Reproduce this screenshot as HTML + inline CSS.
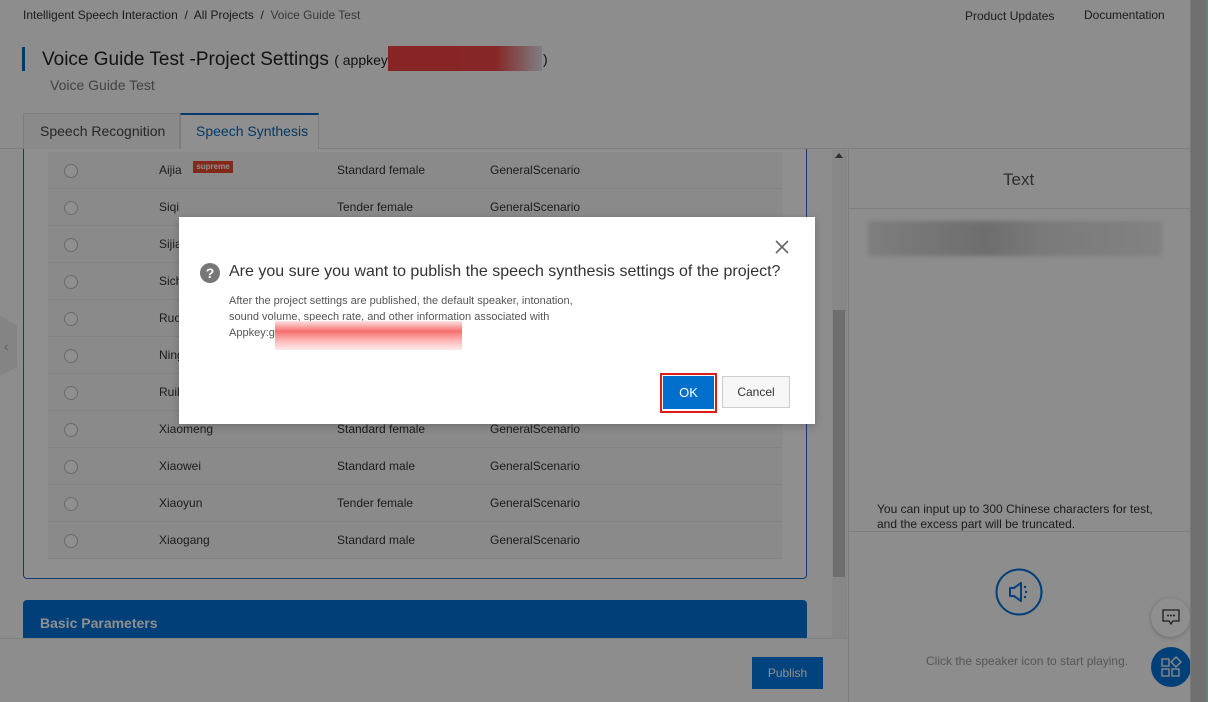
<!DOCTYPE html>
<html><head><meta charset="utf-8"><style>
*{margin:0;padding:0;box-sizing:border-box}
body{width:1208px;height:702px;overflow:hidden;background:#fbfbfb;font-family:"Liberation Sans",sans-serif;position:relative;color:#1a1a1a}
.a{position:absolute}
.t{font-size:12px;color:#333;white-space:nowrap}
.row{position:absolute;left:48px;width:734px;height:37px;border-bottom:1px solid #e8e8e8;background:#f7f7f7}
.row .r{position:absolute;left:16px;top:12px;width:14px;height:14px;border:1px solid #bbb;border-radius:50%;background:#fff}
.row span{position:absolute;top:11px;font-size:12px;color:#333}
</style></head><body>
<div class="a t" style="left:23px;top:8px;color:#333">Intelligent Speech Interaction &nbsp;/&nbsp; All Projects &nbsp;/&nbsp; <span style="color:#666">Voice Guide Test</span></div>
<div class="a t" style="left:965px;top:9px">Product Updates</div>
<div class="a t" style="left:1084px;top:8px">Documentation</div>
<div class="a" style="left:22px;top:47px;width:3px;height:24px;background:#0068c0"></div>
<div class="a" style="left:42px;top:49px;font-size:19px;color:#222;white-space:nowrap">Voice Guide Test -Project Settings <span style="font-size:14px">( appkey:</span></div>
<div class="a" style="left:388px;top:46px;width:154px;height:25px;background:linear-gradient(90deg,#f04040 0%,#f04545 70%,#e0e2ea 100%)"></div>
<div class="a" style="left:543px;top:51px;font-size:14px;color:#222">)</div>
<div class="a" style="left:50px;top:77px;font-size:14px;color:#777">Voice Guide Test</div>
<div class="a" style="left:0;top:148px;width:1190px;height:1px;background:#e0e0e0"></div>
<div class="a" style="left:23px;top:113px;width:157px;height:36px;border:1px solid #e0e0e0;border-bottom:none;background:#f7f7f7"></div>
<div class="a" style="left:40px;top:123px;font-size:14px;color:#444">Speech Recognition</div>
<div class="a" style="left:180px;top:113px;width:139px;height:36px;border:1px solid #e0e0e0;border-top:2px solid #0068c0;border-bottom:none;background:#fff"></div>
<div class="a" style="left:196px;top:123px;font-size:14px;color:#0a66b4">Speech Synthesis</div>
<div class="a" style="left:23px;top:149px;width:784px;height:430px;border:1px solid #1b6ec0;border-top:none;border-radius:0 0 4px 4px;background:#fff"></div>
<div class="row" style="top:152px"><div class="r"></div><span style="left:111px">Aijia</span><div class="a" style="left:145px;top:9px;width:40px;height:12px;background:#e84a2e;color:#fff;font-size:8px;font-weight:bold;text-align:center;line-height:12px">supreme</div><span style="left:289px">Standard female</span><span style="left:442px">GeneralScenario</span></div>
<div class="row" style="top:189px"><div class="r"></div><span style="left:111px">Siqi</span><span style="left:289px">Tender female</span><span style="left:442px">GeneralScenario</span></div>
<div class="row" style="top:226px"><div class="r"></div><span style="left:111px">Sijia</span></div>
<div class="row" style="top:263px"><div class="r"></div><span style="left:111px">Sicheng</span></div>
<div class="row" style="top:300px"><div class="r"></div><span style="left:111px">Ruoxi</span></div>
<div class="row" style="top:337px"><div class="r"></div><span style="left:111px">Ninger</span></div>
<div class="row" style="top:374px"><div class="r"></div><span style="left:111px">Ruilin</span></div>
<div class="row" style="top:411px"><div class="r"></div><span style="left:111px">Xiaomeng</span><span style="left:289px">Standard female</span><span style="left:442px">GeneralScenario</span></div>
<div class="row" style="top:448px"><div class="r"></div><span style="left:111px">Xiaowei</span><span style="left:289px">Standard male</span><span style="left:442px">GeneralScenario</span></div>
<div class="row" style="top:485px"><div class="r"></div><span style="left:111px">Xiaoyun</span><span style="left:289px">Tender female</span><span style="left:442px">GeneralScenario</span></div>
<div class="row" style="top:522px"><div class="r"></div><span style="left:111px">Xiaogang</span><span style="left:289px">Standard male</span><span style="left:442px">GeneralScenario</span></div>
<div class="a" style="left:0;top:316px;width:17px;height:60px;background:#ececec;clip-path:polygon(0 0,100% 15%,100% 85%,0 100%)"></div>
<div class="a" style="left:4px;top:338px;font-size:14px;color:#aaa">‹</div>
<div class="a" style="left:832px;top:150px;width:15px;height:488px;background:#f0f0f0"></div>
<div class="a" style="left:833px;top:310px;width:12px;height:267px;background:#c4c4c4"></div>
<div class="a" style="left:835px;top:153px;width:0;height:0;border:4px solid transparent;border-bottom:5px solid #555;border-top:none"></div>
<div class="a" style="left:848px;top:149px;width:1px;height:553px;background:#e0e0e0"></div>
<div class="a" style="left:849px;top:208px;width:341px;height:1px;background:#e0e0e0"></div>
<div class="a" style="left:1003px;top:170px;font-size:17px;color:#555">Text</div>
<div class="a" style="left:868px;top:221px;width:294px;height:35px;background:linear-gradient(90deg,#e0e0e0,#c4c4c4 40%,#dadada 60%,#e8e8e8);filter:blur(2px)"></div>
<div class="a" style="left:877px;top:502px;font-size:12px;color:#333;line-height:15px">You can input up to 300 Chinese characters for test,<br>and the excess part will be truncated.</div>
<div class="a" style="left:849px;top:531px;width:341px;height:1px;background:#e0e0e0"></div>
<svg class="a" style="left:995px;top:568px" width="48" height="48" viewBox="0 0 48 48"><circle cx="24" cy="24" r="22.5" fill="none" stroke="#0070d6" stroke-width="2"/><path d="M15 20h4l7-5v18l-7-5h-4z" fill="none" stroke="#0070d6" stroke-width="2" stroke-linejoin="round"/><circle cx="30" cy="19" r="1.2" fill="#0070d6"/><circle cx="31" cy="24" r="1.2" fill="#0070d6"/><circle cx="30" cy="29" r="1.2" fill="#0070d6"/></svg>
<div class="a" style="left:926px;top:654px;font-size:12px;color:#999">Click the speaker icon to start playing.</div>
<div class="a" style="left:1151px;top:598px;width:39px;height:39px;border-radius:50%;background:#fff;box-shadow:0 1px 4px rgba(0,0,0,.25)"></div>
<svg class="a" style="left:1162px;top:609px" width="18" height="17" viewBox="0 0 18 17"><path d="M1 1h16v11h-6l-2 3-2-3H1z" fill="none" stroke="#333" stroke-width="1.3"/><circle cx="6" cy="6.5" r="1" fill="#333"/><circle cx="9" cy="6.5" r="1" fill="#333"/><circle cx="12" cy="6.5" r="1" fill="#333"/></svg>
<div class="a" style="left:1151px;top:647px;width:40px;height:40px;border-radius:50%;background:#0070d6"></div>
<svg class="a" style="left:1159px;top:655px" width="24" height="24" viewBox="0 0 24 24" fill="none" stroke="#fff" stroke-width="1.3"><rect x="3" y="4" width="7" height="7"/><path d="M17 2l5 5-5 5-5-5z"/><rect x="3" y="14" width="7" height="7"/><rect x="13" y="14" width="7" height="7"/></svg>
<div class="a" style="left:23px;top:600px;width:784px;height:40px;background:#0070d6;border-radius:4px 4px 0 0"></div>
<div class="a" style="left:40px;top:615px;font-size:14px;font-weight:bold;color:#fff">Basic Parameters</div>
<div class="a" style="left:0;top:638px;width:848px;height:64px;background:#fbfbfb;border-top:1px solid #e8e8e8"></div>
<div class="a" style="left:752px;top:657px;width:71px;height:32px;background:#0078e0;color:#fff;font-size:12px;text-align:center;line-height:32px">Publish</div>
<div class="a" style="left:1190px;top:0;width:18px;height:702px;background:#c8c8c8;border-left:1px solid #d8d8d8;border-right:2px solid #b0e8c8"></div>
<div class="a" style="left:0;top:0;width:1208px;height:702px;background:rgba(0,0,0,0.44)"></div>
<div class="a" style="left:179px;top:217px;width:636px;height:207px;background:#fff;box-shadow:0 2px 8px rgba(0,0,0,.2)"></div>
<svg class="a" style="left:774px;top:239px" width="16" height="16" viewBox="0 0 16 16"><path d="M2 2l12 12M14 2L2 14" stroke="#666" stroke-width="1.6"/></svg>
<div class="a" style="left:200px;top:263px;width:20px;height:20px;border-radius:50%;background:#777;color:#fff;font-size:14px;font-weight:bold;text-align:center;line-height:20px">?</div>
<div class="a" style="left:229px;top:263px;font-size:16px;color:#333;white-space:nowrap">Are you sure you want to publish the speech synthesis settings of the project?</div>
<div class="a" style="left:229px;top:293px;font-size:11px;color:#555;line-height:16px;white-space:nowrap">After the project settings are published, the default speaker, intonation,<br>sound volume, speech rate, and other information associated with<br>Appkey:g</div>
<div class="a" style="left:275px;top:321px;width:187px;height:29px;background:linear-gradient(180deg,#fde2e2,#f67070 35%,#fbb 70%,#fdeaea);"></div>
<div class="a" style="left:660px;top:373px;width:57px;height:40px;border:2px solid #e0191b"></div>
<div class="a" style="left:663px;top:376px;width:51px;height:33px;background:#0070cc;color:#fff;font-size:13px;text-align:center;line-height:33px">OK</div>
<div class="a" style="left:722px;top:376px;width:68px;height:32px;border:1px solid #ccc;background:#f7f7f7;color:#333;font-size:12px;text-align:center;line-height:30px">Cancel</div>
</body></html>
